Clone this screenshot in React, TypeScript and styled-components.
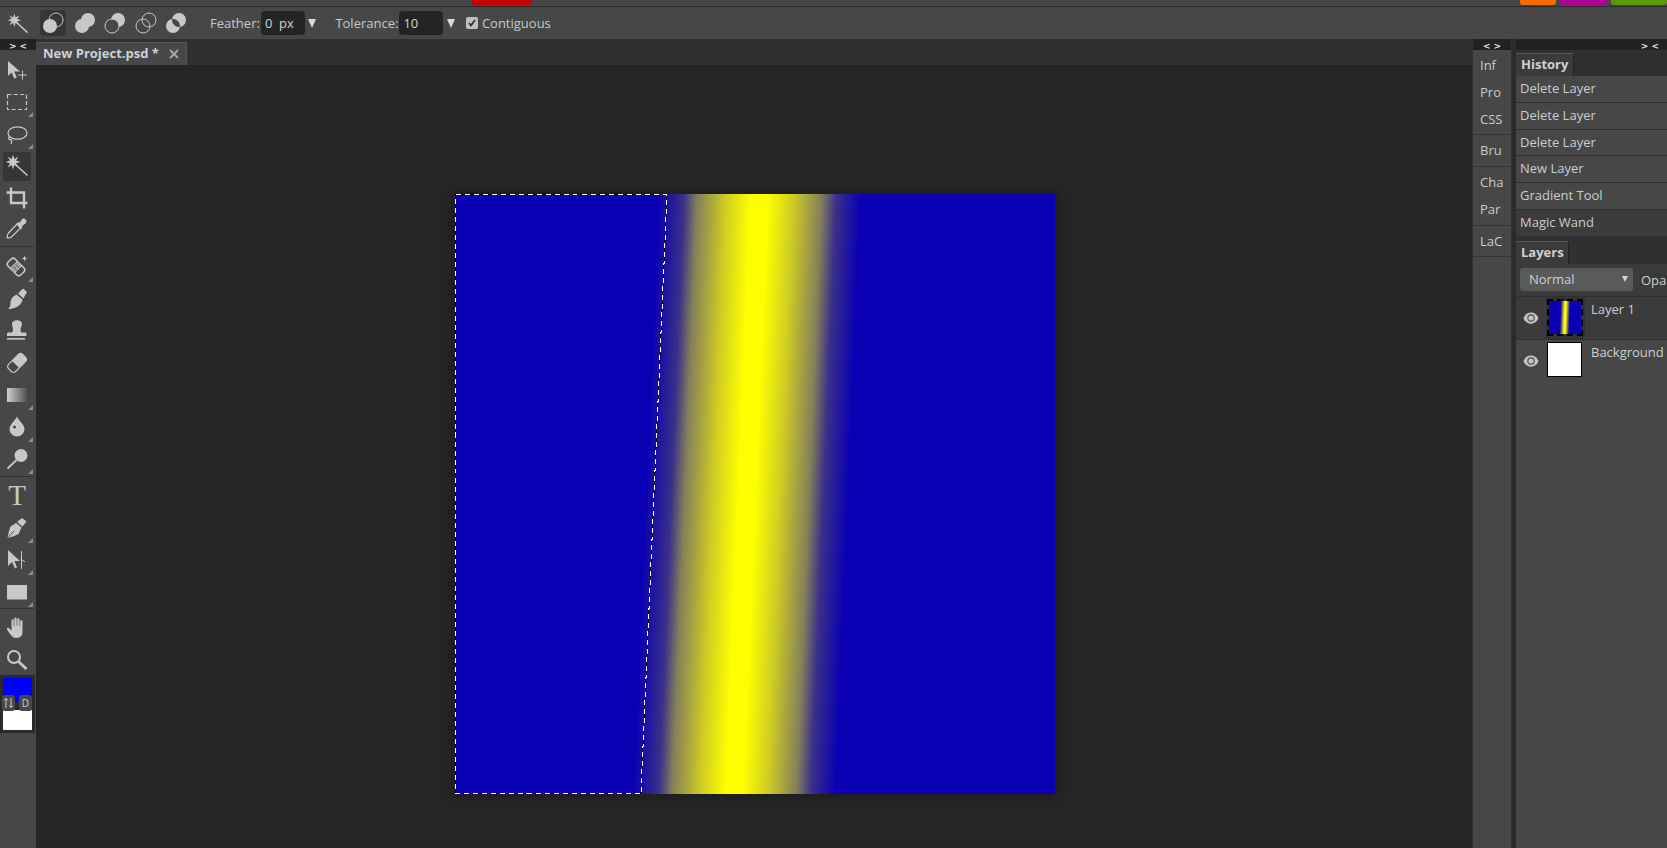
import React from "react";
import styled, { createGlobalStyle } from "styled-components";

const Global = createGlobalStyle`
  html, body { margin: 0; padding: 0; background: #252525; }
  body { font-family: "Open Sans", "Liberation Sans", sans-serif; font-size: 13px; color: #c9cfd3; overflow: hidden; }
`;

const Page = styled.div`
  width: 1667px; height: 848px; display: flex; flex-direction: column; overflow: hidden; background: #252525;
`;
const MenuStrip = styled.div`
  height: 6px; background: #474747; border-bottom: 1px solid #2a2a2a; display: flex; flex: none;
`;
const Tag = styled.div<{ $c: string; $w: number; $ml: number }>`
  width: ${p => p.$w}px; margin-left: ${p => p.$ml}px; height: 5px; background: ${p => p.$c}; border-radius: 0 0 3px 3px;
`;
const Options = styled.div`
  height: 32px; flex: none; background: #474747; display: flex; align-items: center; padding-left: 7px;
`;
const OpIcon = styled.div<{ $active?: boolean; $ml?: number }>`
  width: 26px; height: 26px; border-radius: 4px; flex: none; display: flex; align-items: center; justify-content: center;
  background: ${p => (p.$active ? "#363636" : "transparent")}; margin-left: ${p => p.$ml ?? 0}px;
`;
const OptLabel = styled.span<{ $ml: number }>`
  margin-left: ${p => p.$ml}px; color: #c4cacd; white-space: nowrap;
`;
const NumBox = styled.div`
  width: 44px; height: 24px; box-sizing: border-box; margin-left: 1px; background: #242424; border-radius: 4px; padding-left: 4px; line-height: 24px; color: #d0d4d6; white-space: pre;
`;
const Arrow = styled.span`
  width: 0; height: 0; margin-left: 3.5px; border-left: 4.5px solid transparent; border-right: 4.5px solid transparent; border-top: 9px solid #d4dadd;
`;
const Check = styled.span`
  width: 12px; height: 12px; margin-left: 11px; background: #c0c0c0; border-radius: 2px; display: flex; align-items: center; justify-content: center; flex: none;
`;
const Main = styled.div`
  flex: 1; display: flex; min-height: 0;
`;
const ToolColumn = styled.div`
  width: 36px; flex: none; display: flex; flex-direction: column; background: #474747;
`;
const CollapseBar = styled.div<{ $align?: string; $pr?: number }>`
  height: 11px; box-sizing: border-box; padding-top: 2px; background: #222; color: #e8e8e8; flex: none; display: flex; font: bold 9px/10px "DejaVu Sans", sans-serif; white-space: pre;
  justify-content: ${p => p.$align ?? "center"}; padding-right: ${p => p.$pr ?? 0}px; overflow: hidden;
`;
const ToolGroup = styled.div<{ $pt: number; $sep?: boolean; $pb?: number }>`
  display: flex; flex-direction: column; align-items: center; width: 34px; padding-top: ${p => p.$pt}px; padding-bottom: ${p => p.$pb ?? 0}px;
  border-bottom: ${p => (p.$sep ? "1px solid #333" : "none")};
`;
const Tool = styled.div<{ $active?: boolean; $fly?: boolean }>`
  position: relative; width: 28px; height: 29px; margin: 1.5px 0; border-radius: 3px; display: flex; align-items: center; justify-content: center;
  background: ${p => (p.$active ? "#363636" : "transparent")};
  &::after {
    content: ""; display: ${p => (p.$fly ? "block" : "none")}; position: absolute; right: -2px; bottom: 0; width: 0; height: 0;
    border-left: 5px solid transparent; border-bottom: 5px solid #8c8c8c;
  }
`;
const TypeGlyph = styled.span`
  font: 29px/29px "Liberation Serif", serif; color: #c8c8c8; margin-top: -2px;
`;
const Swatches = styled.div`
  position: relative; height: 58px; width: 35px; box-sizing: border-box; background: #2a2a2a; padding: 3px; display: flex; flex-direction: column; justify-content: space-between; margin-top: -1px;
`;
const Swatch = styled.div<{ $c: string; $h: number }>`
  height: ${p => p.$h}px; background: ${p => p.$c};
`;
const SwapButton = styled.div<{ $left: number }>`
  position: absolute; top: 20px; left: ${p => p.$left}px; width: 13px; height: 16px; background: #474747; border-radius: 3px; display: flex; align-items: center; justify-content: center;
  font: 10px/16px "Open Sans", sans-serif; color: #c3d4e2;
`;
const Center = styled.div`
  flex: 1; min-width: 0; display: flex; flex-direction: column;
`;
const TabBar = styled.div`
  height: 26px; flex: none; background: #303030; display: flex; align-items: flex-end;
`;
const DocTab = styled.div`
  width: 151px; height: 23px; box-sizing: border-box; border-top: 1px solid #585858; border-right: 1px solid #555; background: #474747; display: flex; align-items: center; padding: 0 0 2px 7px; font-weight: 700; color: #c9d2da; white-space: pre;
`;
const Close = styled.span`
  margin-left: 10px; display: flex; padding-top: 2px;
`;
const Stage = styled.div`
  flex: 1; background: #252525; display: flex; justify-content: center; align-items: flex-start; padding: 129px 0 0 2px;
`;
const Canvas = styled.div`
  position: relative; width: 600px; height: 600px; flex: none; box-shadow: 0 0 10px rgba(0, 0, 0, 0.4);
  background: linear-gradient(92.4deg, #0a00b4 0%, #0a00b4 32.5%, #3a3088 36.6%, #858059 38.8%, #cecc24 43.3%, #ffff00 47.4%, #ffff00 50%, #cecc24 54.1%, #858059 58.6%, #3a3088 61%, #0a00b4 65%, #0a00b4 100%);
`;
const Selection = styled.svg`
  position: absolute; left: 0; top: 0; width: 600px; height: 600px; overflow: visible;
`;
const TabStrip = styled.div`
  width: 40px; flex: none; display: flex; flex-direction: column; background: #474747; border-left: 1px solid #303030; box-sizing: border-box; border-right: 1px solid #303030;
`;
const StripGroup = styled.div<{ $pb: number }>`
  display: flex; flex-direction: column; border-bottom: 1px solid #333; padding: 2px 0 ${p => p.$pb}px;
`;
const StripItem = styled.div`
  height: 27px; line-height: 27px; padding-left: 7px; color: #c6ccd0;
`;
const Gap = styled.div`
  width: 4px; flex: none; background: #2b2b2b;
`;
const Panel = styled.div`
  width: 151px; flex: none; display: flex; flex-direction: column; background: #474747; overflow: hidden;
`;
const PanelTabs = styled.div<{ $h: number }>`
  height: ${p => p.$h}px; flex: none; background: #303030; display: flex; align-items: flex-end;
`;
const PanelTab = styled.div<{ $w: number }>`
  width: ${p => p.$w}px; height: 23px; box-sizing: border-box; border-top: 1px solid #555; border-right: 1px solid #222; background: #3b3b3b; padding-left: 5px; line-height: 20px; font-weight: 700; color: #ccd3d8;
`;
const HistoryRow = styled.div<{ $sel?: boolean }>`
  height: 26.8px; flex: none; box-sizing: border-box; background: ${p => (p.$sel ? "#3b3b3b" : "#474747")}; border-bottom: 1px solid #2f2f2f; padding-left: 4px; line-height: 25px; color: #c8ced2; white-space: nowrap;
`;
const BlendRow = styled.div`
  height: 33px; flex: none; background: #3b3b3b; display: flex; align-items: center; padding-left: 4px; border-bottom: 1px solid #2f2f2f; box-sizing: border-box; white-space: nowrap;
`;
const Blend = styled.div`
  width: 113px; height: 23px; box-sizing: border-box; flex: none; background: #5a5a5a; border-radius: 3px; padding-left: 9px; line-height: 23px; position: relative; color: #c8d0d6;
  &::after { content: ""; position: absolute; right: 5px; top: 8px; border-left: 3px solid transparent; border-right: 3px solid transparent; border-top: 6px solid #d2d2d2; }
`;
const BlendLabel = styled.span`
  margin-left: 8px; color: #c8d0d6;
`;
const LayerRow = styled.div<{ $sel?: boolean }>`
  height: 43px; flex: none; box-sizing: border-box; display: flex; background: ${p => (p.$sel ? "#3b3b3b" : "#474747")}; border-bottom: ${p => (p.$sel ? "1px solid #2f2f2f" : "none")};
`;
const Eye = styled.div`
  width: 30px; flex: none; display: flex; align-items: center; justify-content: center;
`;
const ThumbCell = styled.div<{ $dark?: boolean }>`
  width: 39px; flex: none; background: ${p => (p.$dark ? "#333" : "transparent")}; padding: 2px 0 0 1px; box-sizing: border-box;
`;
const Thumb = styled.div<{ $w: number; $h: number; $bg: string }>`
  width: ${p => p.$w}px; height: ${p => p.$h}px; box-sizing: border-box; background: ${p => p.$bg}; border: 1.5px solid #000;
`;
const SelThumb = styled(Thumb)`
  border: 2px dashed #000; background-clip: padding-box; background-color: #000;
`;
const LayerName = styled.div`
  margin-left: 6px; line-height: 20px; padding-top: 2px; color: #c8d0d6; white-space: nowrap;
`;

const G = "#c8c8c8";

const OpSvg = ({ n }: { n: number }) => {
  const front = { cx: 8, cy: 14, r: 7 };
  const back = { cx: 14, cy: 8, r: 7 };
  return (
    <svg width="22" height="22" viewBox="0 0 22 22">
      <defs>
        <clipPath id={`clip-${n}`}><circle {...back} /></clipPath>
      </defs>
      {n === 1 && (<><circle {...back} fill="none" stroke={G} /><circle {...front} fill={G} /></>)}
      {n === 2 && (<><circle {...back} fill={G} /><circle {...front} fill={G} /></>)}
      {n === 3 && (<><circle {...back} fill={G} /><circle {...front} fill="#474747" stroke={G} /></>)}
      {n === 4 && (<><circle {...back} fill="none" stroke={G} /><circle {...front} fill="none" stroke={G} /></>)}
      {n === 5 && (<><circle {...back} fill={G} /><circle {...front} fill={G} /><circle {...front} fill="#474747" clipPath={`url(#clip-${n})`} /></>)}
    </svg>
  );
};

const Ico = ({ children }: { children: React.ReactNode }) => (
  <svg width="24" height="24" viewBox="0 0 24 24" fill={G}>{children}</svg>
);

const WandStar = "M8 1.5 9.3 6 13.5 3.5 11 7.6 15.5 9 11 10.3 13.5 14.5 9.3 12 8 16.5 6.7 12 2.5 14.5 5 10.3 .5 9 5 7.6 2.5 3.5 6.7 6Z";

const icons: Record<string, React.ReactNode> = {
  move: <Ico><g transform="translate(0 1)"><path d="M3 2v15l3.6-3.4 2.6 6 2.6-1.1-2.6-5.9H15z" /><path d="M17.5 11.5v9M13 16h9" stroke={G} fill="none" strokeWidth="1" /></g></Ico>,
  marquee: <Ico><rect x="2.5" y="4.5" width="19" height="15" fill="none" stroke={G} strokeWidth="1.2" strokeDasharray="4 2.4" /></Ico>,
  lasso: <Ico><g transform="translate(0 1)"><ellipse cx="12.5" cy="10" rx="9.5" ry="6.2" fill="none" stroke={G} strokeWidth="1.2" /><path d="M4.5 13.5c-2 2-.5 3.5 1 3s1.5 3 .3 4.500" fill="none" stroke={G} strokeWidth="1.2" /></g></Ico>,
  wand: <Ico><g transform="translate(0 -1)"><path d={WandStar} /><path d="M11 12 22.5 22.5" stroke={G} strokeWidth="1.6" /></g></Ico>,
  crop: <Ico><path d="M6 1.5V17H22.5M1.5 6.5H19V22.5" fill="none" stroke={G} strokeWidth="2.4" /></Ico>,
  dropper: <Ico><g transform="translate(0 -1.5)"><path d="M13 6.5 3.5 16.5c-1.2 1.5-1.5 3-1.3 4.8 1.8.3 3.5 0 4.8-1.3L17 10" fill="none" stroke={G} strokeWidth="1.2" /><path d="M11.5 7.5 13.5 5.5 14.5 6.5 17 2.7c1.3-1.3 4-.3 4.3 1.6.3 1.3-.3 2.3-1.2 3L16.5 10l1 1-2 2z" /></g></Ico>,
  heal: <Ico><g transform="translate(0 -1)"><g transform="rotate(45 11 13)"><rect x="2" y="8" width="18" height="10" rx="3" fill="none" stroke={G} strokeWidth="1.6" /><rect x="7.5" y="8" width="7" height="10" /><path d="M9.2 8v10M11 8v10M12.800 8v10M7.500 11.300h7M7.500 14.700h7" stroke="#474747" strokeWidth=".7" /></g><path d="M19.5 1.5l.8 2.2 2.2.8-2.2.8-.8 2.2-.8-2.2-2.2-.8 2.2-.8z" /></g></Ico>,
  brush: <Ico><path d="M18 1.5 22 5 18.4 11.4 13 6.5z" /><path d="M11.5 7.5 17.4 12.5C17 17 13 21.5 3 22c4-3 1-6 4-11 1-1.5 3-2.5 4.5-3.5z" /></Ico>,
  stamp: <Ico><path d="M7 5c0-5 10-5 10 0 0 2-1.500 3.500-1.500 6 0 1 .5 2 1 2.500h4a1.300 1.300 0 0 1 1 1.200V17H2v-2.300a1.300 1.300 0 0 1 1-1.200h4c.5-.5 1-1.500 1-2.500 0-2.500-1-4-1-6z" /><rect x="2" y="19" width="18" height="1.600" /></Ico>,
  eraser: <Ico><g transform="rotate(-45 12 12)"><rect x="2" y="7" width="20" height="10" rx="3" fill="none" stroke={G} strokeWidth="1.200" /><path d="M10 7h9A3 3 0 0 1 22 10v4a3 3 0 0 1-3 3H10z" /></g></Ico>,
  gradient: <Ico><defs><linearGradient id="tool-grad"><stop offset="0" stopColor="#d0d0d0" /><stop offset="1" stopColor="#505050" /></linearGradient></defs><rect x="2" y="5" width="20" height="14" fill="url(#tool-grad)" /></Ico>,
  drop: <Ico><path d="M12 1.500C14 6 19.500 9.500 19.500 14a7.500 7.500 0 0 1-15 0C4.500 9.500 10 6 12 1.500z" /><circle cx="9.500" cy="12" r="1.500" fill="#474747" /></Ico>,
  dodge: <Ico><circle cx="16" cy="8.500" r="6.500" /><path d="M11.500 13 2.500 21.500" stroke={G} strokeWidth="1.800" /></Ico>,
  pen: <Ico><path d="M17 2 21.500 5.500 17.500 10.500 12 6z" /><path d="M11 7 16.500 11.500 13.500 18C10 20 6 21 2.500 22 3.500 18 4 14 5.500 10.500zM2.500 22 9 14.500" /><path d="M3 21.500 9 15" stroke="#474747" strokeWidth=".9" /></Ico>,
  path: <Ico><path d="M3 2v16l4-4 3 6.500 2-1L9.500 13H15z" /><path d="M16.500 3v18M20 14l-4.500-3" fill="none" stroke={G} strokeWidth="1" /></Ico>,
  rect: <Ico><rect x="2" y="5" width="20" height="14.500" /></Ico>,
  hand: <Ico><path d="M8.500 21.500C6 19.500 4 16.500 2 13.500c-.7-1.200 1-2.300 2-1.300l2.500 2.500V4.500c0-1.700 2.200-1.700 2.200 0V10h.6V2.800c0-1.700 2.400-1.700 2.400 0V10h.6V3.500c0-1.600 2.300-1.600 2.300 0V10h.6V5.500c0-1.600 2.300-1.600 2.300 0V16c0 3-1.800 5.500-4.500 5.800-1.500.2-3.500.1-5-.3z" /></Ico>,
  zoom: <Ico><circle cx="9" cy="9" r="6" fill="none" stroke={G} strokeWidth="2" /><path d="M13.500 13.500 21.500 21" stroke={G} strokeWidth="2.800" /></Ico>,
};

type ToolDef = { id: string; fly?: boolean; active?: boolean };

const groups: { pt: number; pb?: number; tools: ToolDef[] }[] = [
  { pt: 4, pb: 0, tools: [{ id: "move" }, { id: "marquee", fly: true }, { id: "lasso", fly: true }, { id: "wand", active: true }, { id: "crop" }, { id: "dropper" }] },
  { pt: 4, pb: 1, tools: [{ id: "heal", fly: true }, { id: "brush" }, { id: "stamp" }, { id: "eraser" }, { id: "gradient", fly: true }, { id: "drop", fly: true }, { id: "dodge", fly: true }] },
  { pt: 3, pb: 0, tools: [{ id: "type" }, { id: "pen", fly: true }, { id: "path", fly: true }, { id: "rect", fly: true }] },
  { pt: 3, tools: [{ id: "hand" }, { id: "zoom" }] },
];

const buildSelection = () => {
  const pts: string[] = ["M.5 .5", "H211.5"];
  let x = 211.5;
  for (let y = 23; y < 599; y += 23) {
    pts.push(`V${y}`);
    x -= 1;
    pts.push(`H${x}`);
  }
  pts.push("V599.5", "H.5", "Z");
  return pts.join(" ");
};

const history = ["Delete Layer", "Delete Layer", "Delete Layer", "New Layer", "Gradient Tool", "Magic Wand"];
const strip = [
  { pb: 1, items: ["Inf", "Pro", "CSS"] },
  { pb: 2, items: ["Bru"] },
  { pb: 2, items: ["Cha", "Par"] },
  { pb: 1, items: ["LaC"] },
];

function EyeIcon() {
  return (
    <svg width="16" height="12" viewBox="0 0 16 12">
      <path d="M0.500 6C3 -1.500 13 -1.500 15.500 6 13 13.500 3 13.500 0.500 6z" fill="#c4c4c4" />
      <circle cx="8" cy="6" r="3.700" fill="#4a4a4a" />
      <circle cx="8" cy="6" r="2.600" fill="#c4c4c4" />
    </svg>
  );
}

export default function App() {
  const sel = buildSelection();
  return (
    <Page>
      <Global />
      <MenuStrip>
        <Tag $c="#c40000" $w={60} $ml={472} />
        <Tag $c="#f56a00" $w={36} $ml={988} />
        <Tag $c="#ac0095" $w={47} $ml={4} />
        <Tag $c="#5a9a00" $w={56} $ml={4} />
      </MenuStrip>
      <Options>
        <svg width="22" height="22" viewBox="0 0 24 24" fill={G}><path d={WandStar} /><path d="M11 12 22.500 22.500" stroke={G} strokeWidth="1.600" /></svg>
        <OpIcon $active $ml={11}><OpSvg n={1} /></OpIcon>
        <OpIcon $ml={6}><OpSvg n={2} /></OpIcon>
        <OpIcon $ml={4}><OpSvg n={3} /></OpIcon>
        <OpIcon $ml={5}><OpSvg n={4} /></OpIcon>
        <OpIcon $ml={4}><OpSvg n={5} /></OpIcon>
        <OptLabel $ml={21}>Feather:</OptLabel>
        <NumBox>0  px</NumBox>
        <Arrow />
        <OptLabel $ml={19}>Tolerance:</OptLabel>
        <NumBox>10</NumBox>
        <Arrow />
        <Check>
          <svg width="10" height="10" viewBox="0 0 10 10"><path d="M2 5l2 2.500L8 2" fill="none" stroke="#333" strokeWidth="1.800" /></svg>
        </Check>
        <OptLabel $ml={4}>Contiguous</OptLabel>
      </Options>
      <Main>
        <ToolColumn>
          <CollapseBar>{"> <"}</CollapseBar>
          {groups.map((g, i) => (
            <ToolGroup key={i} $pt={g.pt} $pb={g.pb} $sep={i < 3}>
              {g.tools.map(t => (
                <Tool key={t.id} $active={t.active} $fly={t.fly}>
                  {t.id === "type" ? <TypeGlyph>T</TypeGlyph> : icons[t.id]}
                </Tool>
              ))}
            </ToolGroup>
          ))}
          <Swatches>
            <Swatch $c="#0000ff" $h={24} />
            <Swatch $c="#ffffff" $h={20} />
            <SwapButton $left={2}>
              <svg width="11" height="12" viewBox="0 0 11 12"><path d="M3 11V1.500M1 3.500 3 1.500 5 3.500M8 1v9.500M6 8.500l2 2 2-2" fill="none" stroke="#d5d5d5" strokeWidth="1" /></svg>
            </SwapButton>
            <SwapButton $left={19}>D</SwapButton>
          </Swatches>
        </ToolColumn>
        <Center>
          <TabBar>
            <DocTab>
              New Project.psd *
              <Close>
                <svg width="10" height="10" viewBox="0 0 10 10"><path d="M1 1l8 8M9 1l-8 8" stroke="#a8a8a8" strokeWidth="1.800" /></svg>
              </Close>
            </DocTab>
          </TabBar>
          <Stage>
            <Canvas>
              <Selection viewBox="0 0 600 600">
                <path d={sel} fill="none" stroke="#000" strokeWidth="1" shapeRendering="crispEdges" />
                <path d={sel} fill="none" stroke="#fff" strokeWidth="1" strokeDasharray="5 4" shapeRendering="crispEdges" />
              </Selection>
            </Canvas>
          </Stage>
        </Center>
        <TabStrip>
          <CollapseBar>{"< >"}</CollapseBar>
          {strip.map((g, i) => (
            <StripGroup key={i} $pb={g.pb}>
              {g.items.map(s => <StripItem key={s}>{s}</StripItem>)}
            </StripGroup>
          ))}
        </TabStrip>
        <Gap />
        <Panel>
          <CollapseBar $align="flex-end" $pr={8}>{"> <"}</CollapseBar>
          <PanelTabs $h={26}><PanelTab $w={58}>History</PanelTab></PanelTabs>
          {history.map((h, i) => (
            <HistoryRow key={i} $sel={i === 5}>{h}</HistoryRow>
          ))}
          <PanelTabs $h={27}><PanelTab $w={53}>Layers</PanelTab></PanelTabs>
          <BlendRow>
            <Blend>Normal</Blend>
            <BlendLabel>Opa</BlendLabel>
          </BlendRow>
          <LayerRow $sel>
            <Eye><EyeIcon /></Eye>
            <ThumbCell $dark>
              <SelThumb $w={36} $h={37} $bg="linear-gradient(92deg, #0a00b4 36%, #ffff00 48%, #ffff00 52%, #0a00b4 64%)" />
            </ThumbCell>
            <LayerName>Layer 1</LayerName>
          </LayerRow>
          <LayerRow>
            <Eye><EyeIcon /></Eye>
            <ThumbCell>
              <Thumb $w={35} $h={35} $bg="#fff" />
            </ThumbCell>
            <LayerName>Background</LayerName>
          </LayerRow>
        </Panel>
      </Main>
    </Page>
  );
}
